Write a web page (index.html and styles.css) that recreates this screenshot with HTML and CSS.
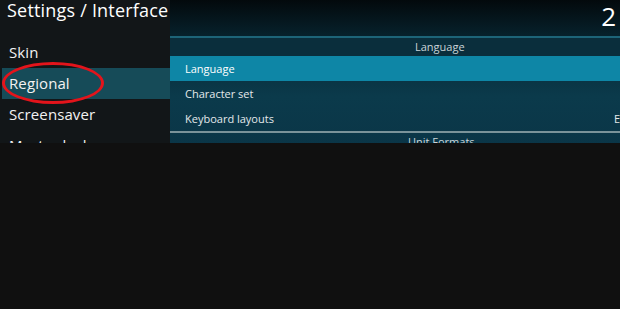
FILE: index.html
```html
<!DOCTYPE html>
<html lang="en">
<head>
    <meta charset="UTF-8">
    <meta name="viewport" content="width=device-width, initial-scale=1.0">
    <title>Settings / Interface</title>
    <link rel="stylesheet" href="styles.css">
</head>
<body>
    <div id="screen">
        <div id="sidebar">
            <h1 class="title">Settings / Interface</h1>
            <ul class="menu">
                <li class="menu-item">Skin</li>
                <li class="menu-item active">Regional</li>
                <li class="menu-item">Screensaver</li>
                <li class="menu-item">Master lock</li>
            </ul>
        </div>

        <div id="panel">
            <div class="clock">2</div>
            <div class="group">
                <div class="group-head">Language</div>
                <div class="row selected">Language</div>
                <div class="row">Character set</div>
                <div class="row">Keyboard layouts <span class="value">E</span></div>
            </div>
            <div class="group">
                <div class="group-head">Unit Formats</div>
            </div>
        </div>
    </div>
</body>
</html>
```

FILE: styles.css
```css
body {
    margin: 0;
    background-color: #101010;
    font-family: 'Open Sans', 'DejaVu Sans', sans-serif;
    color: #f2f2f2;
}
#screen {
    display: grid;
    grid-template-columns: 170px 1fr;
    height: 143px;
    overflow: hidden;
}
#sidebar {
    background-color: #121618;
    position: relative;
    z-index: 1;
}
.title {
    margin: 0;
    height: 37px;
    padding-left: 7px;
    font-size: 18px;
    font-weight: normal;
    line-height: 20px;
    letter-spacing: 0.2px;
    white-space: nowrap;
    color: #ffffff;
}
.menu {
    list-style: none;
    margin: 0;
    padding: 0;
}
.menu-item {
    height: 31px;
    line-height: 31px;
    padding-left: 7px;
    margin-left: 2px;
    font-size: 15px;
    letter-spacing: 0.1px;
    position: relative;
}
.menu-item.active {
    background-color: #164b58;
}
.menu-item.active::after {
    content: '';
    position: absolute;
    left: 0;
    top: -6px;
    width: 96px;
    height: 36px;
    border: 3px solid #e3141b;
    border-radius: 50%;
}
#panel {
    position: relative;
    padding-top: 36px;
    background: linear-gradient(180deg, #03090c 0%, #082a37 30%, #0b3a4b 60%, #0a3446 100%);
}
.clock {
    position: absolute;
    right: 4px;
    top: -2px;
    font-size: 26px;
    color: #ffffff;
}
.group {
    border-top: 2px solid #1d6478;
}
.group + .group {
    border-top-color: #7a939a;
}
.group-head {
    height: 18px;
    line-height: 17px;
    background-color: #0a2e3c;
    font-size: 11px;
    color: #c9d4d8;
    padding-left: 245px;
}
.group + .group .group-head {
    background-color: transparent;
    padding-left: 238px;
}
.row {
    position: relative;
    height: 25px;
    line-height: 25px;
    padding-left: 15px;
    font-size: 11px;
    color: #e4e9eb;
}
.row.selected {
    background-color: #0e86a6;
    color: #ffffff;
}
.value {
    position: absolute;
    right: 0;
}
```
